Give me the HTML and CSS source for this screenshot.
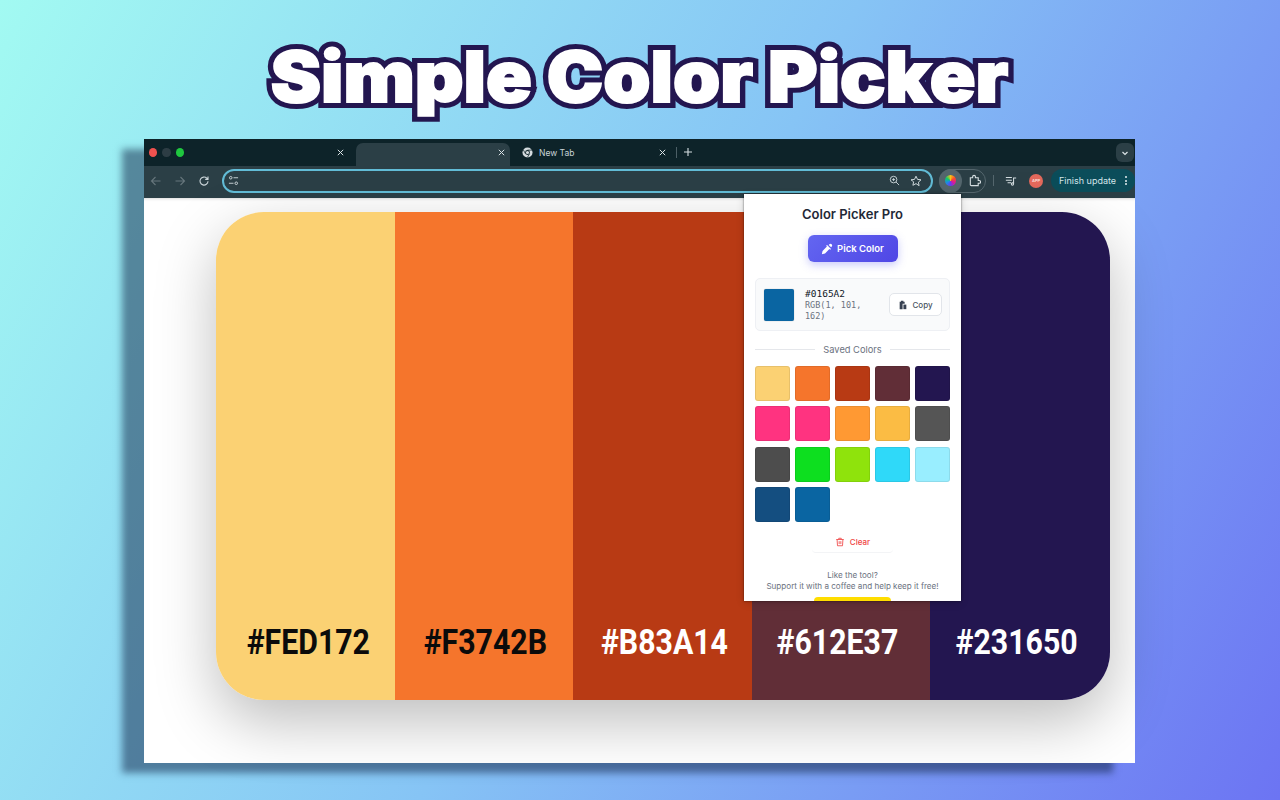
FILE: index.html
```html
<!DOCTYPE html>
<html lang="en">
<head>
  <meta charset="UTF-8">
  <title>Simple Color Picker</title>
  <link rel="stylesheet" href="styles.css">
</head>
<body>
  <h1 class="headline"><span class="headline-text" data-text="Simple Color Picker">Simple Color Picker</span></h1>

  <div class="browser">
    <div class="tabstrip">
      <div class="lights">
        <span class="light red"></span>
        <span class="light off"></span>
        <span class="light green"></span>
      </div>
      <div class="tab first">
        <svg class="tab-x" viewBox="0 0 10 10"><path d="M2 2l6 6M8 2l-6 6"/></svg>
      </div>
      <div class="tab active">
        <svg class="tab-x" viewBox="0 0 10 10"><path d="M2 2l6 6M8 2l-6 6"/></svg>
      </div>
      <div class="tab third">
        <svg class="tab-icon" viewBox="0 0 12 12">
          <circle cx="6" cy="6" r="5.5" fill="#d5dcdf"/>
          <circle cx="6" cy="6" r="2.6" fill="#0d2329"/>
          <circle cx="6" cy="6" r="1.7" fill="#d5dcdf"/>
          <path d="M6 3.4h5M3.8 7.4L1.4 3M8.2 7.4L5.8 11.4" stroke="#0d2329" stroke-width=".8"/>
        </svg>
        <span class="tab-title">New Tab</span>
        <svg class="tab-x" viewBox="0 0 10 10"><path d="M2 2l6 6M8 2l-6 6"/></svg>
      </div>
      <span class="tab-sep"></span>
      <svg class="tab-plus" viewBox="0 0 10 10"><path d="M5 1v8M1 5h8"/></svg>
      <div class="tab-menu">
        <svg viewBox="0 0 10 10"><path d="M2.5 4L5 6.5 7.5 4"/></svg>
      </div>
    </div>

    <div class="toolbar">
      <svg class="nav dim" viewBox="0 0 12 12"><path d="M10.5 6h-9M5.5 2L1.5 6l4 4"/></svg>
      <svg class="nav dim" viewBox="0 0 12 12"><path d="M1.5 6h9M6.5 2l4 4-4 4"/></svg>
      <svg class="nav" viewBox="0 0 12 12"><path d="M10 6.2A4 4 0 1 1 8.8 3.2L10 4.4M10 1.6v2.8H7.2"/></svg>

      <div class="omnibox">
        <svg class="omni-icon tune" viewBox="0 0 12 12"><circle cx="3" cy="3" r="1.4"/><path d="M6 3h5M1 9h5"/><circle cx="9" cy="9" r="1.4"/></svg>
        <svg class="omni-icon zoom-i" viewBox="0 0 12 12"><circle cx="5" cy="5" r="3.6"/><path d="M7.7 7.7L11 11M3.4 5h3.2M5 3.4v3.2"/></svg>
        <svg class="omni-icon star" viewBox="0 0 12 12"><path d="M6 1.2l1.5 3.2 3.5.4-2.6 2.4.7 3.5L6 8.6l-3.1 1.7.7-3.5L1 4.8l3.5-.4z"/></svg>
      </div>

      <div class="ext-group">
        <div class="ext-active"><span class="wheel"></span></div>
        <svg class="puzzle" viewBox="0 0 14 14"><path d="M2.5 4H5V3a1.5 1.5 0 0 1 3 0v1h3v3h1a1.5 1.5 0 0 1 0 3h-1v2.5H3.5a1 1 0 0 1-1-1z"/></svg>
      </div>
      <span class="bar-sep"></span>
      <svg class="media" viewBox="0 0 14 14"><path d="M1 3h7M1 6h7M3 9h4"/><path d="M10 10.500V3.500h3M10 10.500a1.300 1.300 0 1 1-1.300-1.300H10"/></svg>
      <span class="avatar">APP</span>
      <div class="update">
        <span>Finish update</span>
        <span class="dots"><i></i><i></i><i></i></span>
      </div>
    </div>

    <div class="page">
      <div class="palette">
        <div class="stripe s1"><span>#FED172</span></div>
        <div class="stripe s2"><span>#F3742B</span></div>
        <div class="stripe s3"><span>#B83A14</span></div>
        <div class="stripe s4"><span>#612E37</span></div>
        <div class="stripe s5"><span>#231650</span></div>
      </div>
    </div>

    <div class="popup">
      <h2 class="popup-title">Color Picker Pro</h2>
      <button class="pick">
        <svg viewBox="0 0 14 14"><path d="M9 2.200l2.800 2.800 .8-.8a2 2 0 0 0-2.800-2.800zM8 3.200l-1-.9-1 1 .9.900L1.800 9.300 1 13l3.700-.8 5.100-5.100 .9.900 1-1-.9-1z"/></svg>
        Pick Color
      </button>

      <div class="current">
        <span class="current-swatch"></span>
        <div class="current-text">
          <div class="hex">#0165A2</div>
          <div class="rgb">RGB(1, 101, 162)</div>
        </div>
        <button class="copy">
          <svg viewBox="0 0 12 12"><path d="M2 2h1.500V1h3v1H8v2.500H5.500V11H2z"/><path d="M6.500 5.500H10V11H6.500z"/></svg>
          Copy
        </button>
      </div>

      <div class="divider">Saved Colors</div>

      <div class="saved">
        <span class="chip c1"></span><span class="chip c2"></span><span class="chip c3"></span><span class="chip c4"></span><span class="chip c5"></span>
        <span class="chip c6"></span><span class="chip c6"></span><span class="chip c7"></span><span class="chip c8"></span><span class="chip c9"></span>
        <span class="chip c10"></span><span class="chip c11"></span><span class="chip c12"></span><span class="chip c13"></span><span class="chip c14"></span>
        <span class="chip c15"></span><span class="chip c16"></span>
      </div>

      <button class="clear">
        <svg viewBox="0 0 12 12"><path d="M1.500 3h9M4.500 3V1.500h3V3M2.500 3l.5 7.500h6L9.500 3M5 5v3.500M7 5v3.500"/></svg>
        Clear
      </button>

      <p class="support">Like the tool?<br>Support it with a coffee and help keep it free!</p>
      <div class="coffee"></div>
    </div>
  </div>
</body>
</html>
```

FILE: styles.css
```css
* {
  box-sizing: border-box;
}
html, body {
  height: 100%;
}
body {
  margin: 0;
  height: 800px;
  overflow: hidden;
  padding-left: 144px;
  background: linear-gradient(119deg, #a2faf2 0%, #86c4f5 50%, #6c74f3 100%);
  font-family: Inter, "Liberation Sans", sans-serif;
}

.headline {
  width: 991px;
  height: 139px;
  margin: 0;
  padding-top: 27px;
  font-size: 70px;
  line-height: 100px;
  font-weight: 900;
  text-align: center;
  white-space: nowrap;
  color: #fff;
}
.headline-text {
  position: relative;
  display: inline-block;
  transform: scaleX(1.08);
  -webkit-text-stroke: 12px #231650;
  paint-order: stroke fill;
}
/* second pass fattens the white letters */
.headline-text::after {
  content: attr(data-text);
  position: absolute;
  left: 0;
  top: 0;
  -webkit-text-stroke: 2px #fff;
}

.browser {
  position: relative;
  width: 991px;
  height: 624px;
  display: flex;
  flex-direction: column;
  box-shadow: -22px 10px 7px rgba(16, 36, 70, 0.5);
}

/* tab strip */
.tabstrip {
  display: flex;
  align-items: flex-end;
  height: 27px;
  background: #0d2329;
}
.lights {
  display: flex;
  gap: 5px;
  align-self: center;
  width: 40px;
  padding-left: 5px;
}
.light {
  width: 9px;
  height: 9px;
  border-radius: 50%;
}
.red { background: #f0524f; }
.off { background: #2d3d44; }
.green { background: #1fc73f; }
.tab {
  display: flex;
  align-items: center;
  justify-content: flex-end;
  height: 23px;
  padding-bottom: 4px;
  padding-right: 5px;
}
.first {
  width: 172px;
  padding-right: 11px;
}
.active {
  width: 154px;
  background: #2b3f46;
  border-radius: 7px 7px 0 0;
  padding-right: 4px;
}
.third {
  width: 161px;
  justify-content: flex-start;
  padding-left: 12px;
  padding-right: 4px;
}
.tab-x {
  width: 9px;
  height: 9px;
  fill: none;
  stroke: #dde5e8;
  stroke-width: 1.100;
}
.tab-icon {
  width: 11px;
  height: 11px;
}
.tab-title {
  flex: 1;
  margin-left: 6px;
  font-size: 8.500px;
  color: #c9d4d8;
}
.tab-sep {
  width: 1px;
  height: 11px;
  margin: 0 0 8px 5px;
  background: #4c5f66;
}
.tab-plus {
  width: 10px;
  height: 10px;
  margin: 0 0 9px 6px;
  fill: none;
  stroke: #d6dfe2;
  stroke-width: 1.100;
}
.tab-menu {
  width: 18px;
  height: 19px;
  margin: 0 1px 4px auto;
  border-radius: 6px;
  background: #2b3f46;
  display: flex;
  align-items: center;
  justify-content: center;
}
.tab-menu svg {
  width: 10px;
  height: 10px;
  fill: none;
  stroke: #dde5e8;
  stroke-width: 1.200;
}

/* toolbar */
.toolbar {
  display: flex;
  align-items: center;
  height: 32px;
  background: #2b3f46;
  padding: 0 0 3px 6px;
}
.nav {
  width: 12px;
  height: 12px;
  margin-right: 12px;
  fill: none;
  stroke: #ccd6da;
  stroke-width: 1.100;
}
.nav.dim {
  stroke: #66767c;
}
.omnibox {
  display: flex;
  align-items: center;
  width: 711px;
  height: 24px;
  padding: 0 9px 0 4px;
  border: 2px solid #62bcd6;
  border-radius: 12px;
}
.omni-icon {
  width: 11px;
  height: 11px;
  fill: none;
  stroke: #cfd9dc;
  stroke-width: 1;
}
.zoom-i {
  margin-left: auto;
  margin-right: 10px;
}
.star {
  width: 12px;
  height: 12px;
}
.ext-group {
  display: flex;
  align-items: center;
  width: 47px;
  height: 24px;
  margin-left: 6px;
  border: 1px solid #55676e;
  border-radius: 12px;
}
.ext-active {
  display: flex;
  align-items: center;
  justify-content: center;
  width: 23px;
  height: 24px;
  margin-left: -1px;
  border-radius: 50%;
  background: #54666d;
}
.wheel {
  width: 11px;
  height: 11px;
  border-radius: 50%;
  background: conic-gradient(#f5c518, #ff4b2b, #e0189a, #6a3df0, #1c8fe8, #12c96b, #f5c518);
}
.puzzle {
  width: 13px;
  height: 13px;
  margin-left: 6px;
  fill: none;
  stroke: #d6dfe2;
  stroke-width: 1.200;
}
.bar-sep {
  width: 1px;
  height: 11px;
  margin-left: 7px;
  background: #55676e;
}
.media {
  width: 12px;
  height: 12px;
  margin-left: 11px;
  fill: none;
  stroke: #d6dfe2;
  stroke-width: 1.200;
}
.avatar {
  width: 14px;
  height: 14px;
  margin-left: 12px;
  border-radius: 50%;
  background: #e5695c;
  font-size: 4px;
  font-weight: 700;
  line-height: 14px;
  text-align: center;
  color: #fbdcd6;
}
.update {
  display: flex;
  align-items: center;
  justify-content: space-between;
  width: 84px;
  height: 23px;
  margin-left: 8px;
  padding: 0 8px;
  border-radius: 12px;
  background: #0b4d5a;
  font-size: 9px;
  color: #d3e6ea;
  white-space: nowrap;
}
.dots {
  display: flex;
  flex-direction: column;
  gap: 1.500px;
}
.dots i {
  width: 2px;
  height: 2px;
  border-radius: 50%;
  background: #e4eef0;
}

/* page content */
.page {
  flex: 1;
  background: #fff;
  padding: 14px 25px 63px 72px;
  box-shadow: inset 0 3px 3px -2px rgba(0, 0, 0, 0.15);
}
.palette {
  display: grid;
  grid-template-columns: 179px 178px 179px 178px 180px;
  height: 488px;
  border-radius: 48px;
  overflow: hidden;
  box-shadow: 0 22px 60px rgba(0, 0, 0, 0.26);
}
.stripe {
  display: flex;
  align-items: flex-end;
  justify-content: center;
  padding-bottom: 36px;
  font-family: Roboto, "Liberation Sans", sans-serif;
  font-weight: 700;
  font-size: 35px;
  line-height: 42px;
  color: #fff;
}
.stripe span {
  display: inline-block;
  transform: scaleX(0.865);
}
.s1 { background: #fbd173; color: #0b0b0b; }
.s1 span { margin-left: 5px; }
.s2 { background: #f5752c; color: #0b0b0b; }
.s2 span { margin-left: 2px; }
.s3 { background: #b83a14; }
.s3 span { margin-left: 3px; }
.s4 { background: #612e37; }
.s4 span { margin-right: 7px; }
.s5 { background: #231650; }
.s5 span { margin-right: 6px; }

/* extension popup */
.popup {
  position: absolute;
  left: 600px;
  top: 55px;
  width: 217px;
  height: 407px;
  padding: 12px 11px 0;
  overflow: hidden;
  background: #fff;
  box-shadow: 0 0 2px rgba(0, 0, 0, 0.55), 0 2px 8px rgba(0, 0, 0, 0.15);
  display: flex;
  flex-direction: column;
  align-items: center;
}
.popup > * {
  flex: none;
}
.popup-title {
  margin: 0;
  font-size: 13px;
  line-height: 16px;
  font-weight: 600;
  color: #1f2937;
}
.pick {
  display: flex;
  align-items: center;
  justify-content: center;
  gap: 4px;
  width: 90px;
  height: 27px;
  margin-top: 13px;
  border: 0;
  border-radius: 6px;
  background: linear-gradient(135deg, #6366f1, #4f46e5);
  box-shadow: 0 3px 8px rgba(99, 102, 241, 0.35);
  font: 600 9.500px Inter, sans-serif;
  color: #fff;
}
.pick svg {
  width: 12px;
  height: 12px;
  fill: #fff;
}
.current {
  display: flex;
  align-items: center;
  width: 195px;
  height: 53px;
  margin-top: 16px;
  padding: 0 7px 0 8px;
  border: 1px solid #eef0f4;
  border-radius: 5px;
  background: #f9fafb;
}
.current-swatch {
  flex: none;
  width: 30px;
  height: 32px;
  border-radius: 2px;
  background: #0a65a2;
  box-shadow: 0 0 1px rgba(0, 0, 0, 0.4);
}
.current-text {
  width: 72px;
  margin-left: 11px;
  font-family: "DejaVu Sans Mono", monospace;
}
.hex {
  font-size: 9.500px;
  line-height: 12px;
  font-weight: 500;
  color: #111827;
}
.rgb {
  font-size: 8.500px;
  line-height: 11px;
  color: #6b7280;
}
.copy {
  flex: none;
  display: flex;
  align-items: center;
  justify-content: center;
  gap: 4px;
  width: 53px;
  height: 23px;
  margin-left: auto;
  padding: 0;
  border: 1px solid #e2e5ea;
  border-radius: 5px;
  background: #fff;
  font: 500 8px Inter, sans-serif;
  color: #4b5563;
}
.copy svg {
  width: 10px;
  height: 10px;
  fill: #374151;
}
.divider {
  display: flex;
  align-items: center;
  gap: 8px;
  width: 195px;
  height: 12px;
  margin-top: 12px;
  font-size: 9.300px;
  white-space: nowrap;
  color: #6b7280;
}
.divider::before,
.divider::after {
  content: "";
  flex: 1;
  height: 1px;
  background: #e5e7eb;
}
.saved {
  display: grid;
  grid-template-columns: repeat(5, 35px);
  grid-auto-rows: 35px;
  column-gap: 5px;
  row-gap: 5.300px;
  width: 195px;
  margin-top: 11px;
}
.chip {
  border-radius: 3px;
  box-shadow: inset 0 0 0 1px rgba(0, 0, 0, 0.08);
}
.c1 { background: #fbd173; }
.c2 { background: #f5752c; }
.c3 { background: #b83a14; }
.c4 { background: #612e37; }
.c5 { background: #231650; }
.c6 { background: #ff3380; }
.c7 { background: #ff9933; }
.c8 { background: #fbbc44; }
.c9 { background: #555555; }
.c10 { background: #4d4d4d; }
.c11 { background: #0ddf1f; }
.c12 { background: #8fe30c; }
.c13 { background: #2fd9f9; }
.c14 { background: #99eeff; }
.c15 { background: #144e80; }
.c16 { background: #0a65a2; }
.clear {
  display: flex;
  align-items: center;
  justify-content: center;
  gap: 5px;
  width: 81px;
  height: 21px;
  margin-top: 10px;
  padding: 1px 0 0;
  border: 0;
  border-bottom: 1px solid #f3f4f6;
  border-radius: 4px;
  background: #fff;
  font: 500 8px Inter, sans-serif;
  color: #ef4444;
}
.clear svg {
  width: 10px;
  height: 10px;
  fill: none;
  stroke: #ef4444;
  stroke-width: 1;
}
.support {
  margin: 17px 0 0;
  font-size: 8.100px;
  line-height: 11.500px;
  text-align: center;
  white-space: nowrap;
  color: #6b7280;
}
.coffee {
  width: 77px;
  height: 20px;
  margin-top: 4px;
  border-radius: 4px;
  background: #ffdd00;
}
```
